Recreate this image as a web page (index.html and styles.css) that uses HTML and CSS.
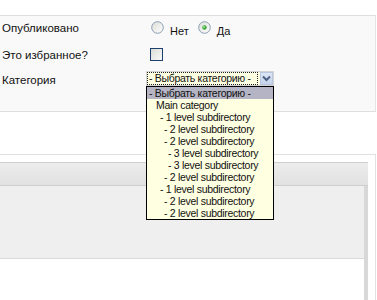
FILE: index.html
```html
<!DOCTYPE html>
<html>
<head>
<meta charset="utf-8">
<link rel="stylesheet" href="styles.css">
</head>
<body>
<div class="top-space"></div>
<div class="panel1">
  <div class="row row-pub">
    <div class="label">Опубликовано</div>
    <div class="field radios">
      <svg class="radio" width="13" height="13" viewBox="0 0 13 13"><defs><linearGradient id="rg" x1="0" y1="0" x2="1" y2="1"><stop offset="0" stop-color="#dcdcd6"/><stop offset="1" stop-color="#ffffff"/></linearGradient></defs><circle cx="6.5" cy="6.5" r="5.8" fill="url(#rg)" stroke="#8a9db5" stroke-width="1"/></svg>
      <span class="rlabel">Нет</span>
      <svg class="radio" width="13" height="13" viewBox="0 0 13 13"><circle cx="6.5" cy="6.5" r="5.8" fill="url(#rg)" stroke="#8a9db5" stroke-width="1"/><circle cx="6.5" cy="6.5" r="2.2" fill="#3aa83a"/><circle cx="6" cy="6" r="1" fill="#9be29b"/></svg>
      <span class="rlabel">Да</span>
    </div>
  </div>
  <div class="row row-fav">
    <div class="label">Это избранное?</div>
    <div class="field"><span class="checkbox"></span></div>
  </div>
  <div class="row row-cat">
    <div class="label">Категория</div>
    <div class="field">
      <div class="select">
        <div class="sel-text">- Выбрать категорию -</div>
        <div class="sel-btn"><svg width="9" height="7" viewBox="0 0 9 7"><path d="M1 1.5 L4.5 5 L8 1.5" fill="none" stroke="#4d6185" stroke-width="2"/></svg></div>
      </div>
    </div>
  </div>
</div>
<div class="gap"></div>
<div class="panel2">
  <div class="inner">
    <div class="inner-head"></div>
    <div class="inner-body"></div>
    <div class="inner-foot"></div>
  </div>
</div>
<ul class="dropdown">
  <li class="sel">- Выбрать категорию -</li>
  <li class="l0">Main category</li>
  <li class="l1">- 1 level subdirectory</li>
  <li class="l2">- 2 level subdirectory</li>
  <li class="l2">- 2 level subdirectory</li>
  <li class="l3">- 3 level subdirectory</li>
  <li class="l3">- 3 level subdirectory</li>
  <li class="l2">- 2 level subdirectory</li>
  <li class="l1">- 1 level subdirectory</li>
  <li class="l2">- 2 level subdirectory</li>
  <li class="l2">- 2 level subdirectory</li>
</ul>
</body>
</html>
```
FILE: styles.css
```css
html, body {
  margin: 0;
  padding: 0;
  background: #fff;
  font-family: "Liberation Sans", Arial, sans-serif;
  font-size: 11px;
  color: #111;
  overflow: hidden;
}
.top-space { height: 15px; }
.panel1 {
  height: 95px;
  margin-right: 1px;
  border-top: 1px solid #dedede;
  border-bottom: 1px solid #dedede;
  border-right: 1px solid #e4e4e4;
  background: #f9f9f9;
  display: flex;
  flex-direction: column;
}
.row {
  display: grid;
  grid-template-columns: 150px 1fr;
  align-items: center;
}
.label { padding-left: 2px; font-size: 11.5px; }
.row-pub { height: 26px; margin-top: -1px; }
.row-fav { height: 27px; }
.row-cat { height: 24px; }
.radios { display: flex; align-items: center; padding-left: 1px; }
.radio { display: block; margin-top: -1px; }
.rlabel { margin: 6px 0 0 6px; padding-right: 9px; }
.checkbox {
  display: block;
  width: 11px;
  height: 11px;
  border: 1px solid #1c3f6e;
  background: linear-gradient(135deg, #dcdcd6, #fafafa);
  margin-left: 0;
}
.select {
  margin-left: -4px;
  margin-top: -3px;
  width: 126px;
  height: 13px;
  border: 1px solid #d4d4d4;
  display: flex;
  background: #ffffe1;
}
.sel-text {
  flex: 1;
  border: 1px dotted #222;
  line-height: 11px;
  font-size: 10.5px;
  letter-spacing: -0.3px;
  padding-left: 1px;
  white-space: nowrap;
  overflow: hidden;
}
.sel-btn {
  width: 13px;
  margin-left: 2px;
  background: linear-gradient(#dde6f4, #c4d2ea);
  border: 1px solid #b8c6de;
  box-sizing: border-box;
  display: flex;
  align-items: center;
  justify-content: center;
}
.gap { height: 42px; }
.panel2 {
  height: 139px;
  margin-right: 1px;
  border-top: 1px solid #e0e0e0;
  border-right: 1px solid #e2e2e2;
  padding-top: 7px;
  padding-right: 7px;
}
.inner {
  border-right: 4px solid #d8d8d8;
  height: 100%;
}
.inner-head {
  height: 22px;
  border-top: 1px solid #cfcfcf;
  border-bottom: 1px solid #cfcfcf;
  background: linear-gradient(#ececec, #e1e1e1);
  margin-right: -4px;
}
.inner-body {
  height: 72px;
  background: #efefef;
  border-bottom: 1px solid #dadada;
}
.inner-foot { height: 42px; background: #fff; }
.dropdown {
  position: absolute;
  left: 146px;
  top: 86px;
  width: 126px;
  margin: 0;
  padding: 0;
  list-style: none;
  background: #ffffe1;
  border: 1px solid #000;
  font-size: 10.5px;
  letter-spacing: -0.3px;
}
.dropdown li {
  height: 12px;
  line-height: 12px;
  white-space: nowrap;
}
.dropdown li.sel { background: #b4b4c4; padding-left: 2px; }
.dropdown .l0 { padding-left: 9px; }
.dropdown .l1 { padding-left: 13px; }
.dropdown .l2 { padding-left: 17px; }
.dropdown .l3 { padding-left: 21px; }
```
